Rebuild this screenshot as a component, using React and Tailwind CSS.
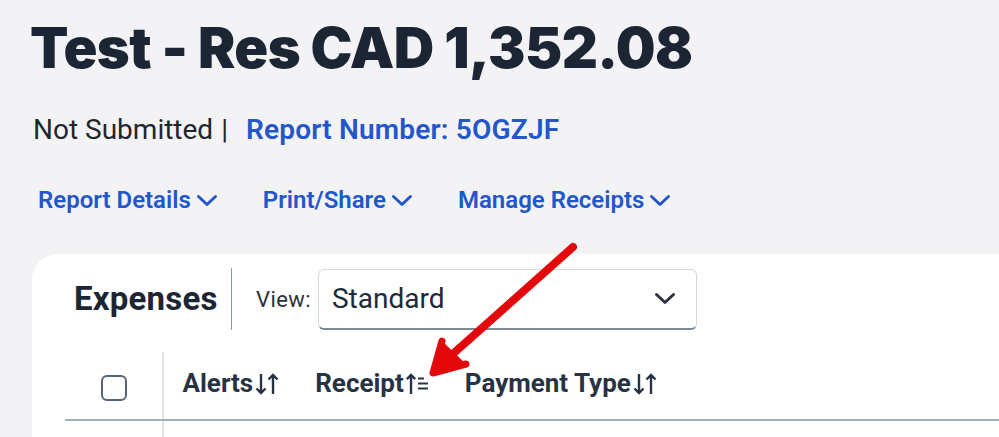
import React from 'react';

const Chevron = ({ className }) => (
  <svg className={className} viewBox="0 0 22 13" fill="none">
    <path d="M2.5 2.5l8.5 8 8.5-8" stroke="currentColor" strokeWidth="3" strokeLinecap="round" strokeLinejoin="round" />
  </svg>
);

// down arrow + up arrow, the neutral sort mark
const SortBoth = () => (
  <svg className="w-[26px] h-[24px] ml-[1px]" viewBox="0 0 26 24" fill="none">
    <path d="M7 2v19M2.5 16.5L7 21l4.5-4.5" stroke="currentColor" strokeWidth="2.4" />
    <path d="M19 22V3M14.5 7.5L19 3l4.5 4.5" stroke="currentColor" strokeWidth="2.4" />
  </svg>
);

// up arrow + stacked lines, the active ascending mark
const SortAsc = () => (
  <svg className="w-[24px] h-[24px] ml-[1px]" viewBox="0 0 24 24" fill="none">
    <path d="M6 22V3M1.8 7.2L6 3l4.2 4.2" stroke="currentColor" strokeWidth="2.4" />
    <path d="M13 6.5h6M13 11.5h10M13 16.5h10" stroke="currentColor" strokeWidth="1.8" />
  </svg>
);

const NavLink = ({ children }) => (
  <button className="flex items-center gap-[5px] text-[24px] font-semibold text-[#2357c9]">
    {children}
    <Chevron className="w-[22px] h-[13px]" />
  </button>
);

export default function App() {
  return (
    <div
      className="relative flex flex-col h-[437px] w-[999px] overflow-hidden bg-[#f3f3f6] text-[#1d2a3a]"
      style={{ fontFamily: 'Roboto, "Liberation Sans", sans-serif' }}
    >
      <h1
        className="pl-[30px] pt-[16px] text-[56px] leading-[64px] font-black text-[#1c2533] tracking-[-0.6px]"
        style={{ fontFamily: 'Inter, "Liberation Sans", sans-serif' }}
      >
        Test - Res CAD 1,352.08
      </h1>

      <div className="flex items-center pl-[33px] mt-[32px] h-[36px] text-[28px]">
        <span className="text-[#22262c]">Not Submitted</span>
        <span className="ml-[8px] text-[#22262c]">|</span>
        <span className="ml-[18px] font-semibold text-[#2357c9] tracking-[0.2px]">Report Number: 5OGZJF</span>
      </div>

      <div className="flex items-center gap-[45px] pl-[38px] mt-[36px] h-[32px]">
        <NavLink>Report Details</NavLink>
        <NavLink>Print/Share</NavLink>
        <NavLink>Manage Receipts</NavLink>
      </div>

      <div className="flex-1 ml-[32px] mt-[38px] bg-white rounded-tl-[26px] flex flex-col">
        <div className="flex items-center h-[62px] mt-[14px] pl-[42px]">
          <span className="text-[33px] font-bold text-[#1c2533] tracking-[0.2px]">Expenses</span>
          <div className="w-[1.5px] h-[62px] bg-[#8a96a3] ml-[13px]" />
          <span className="ml-[24px] text-[22px] tracking-[0.4px] text-[#2a3340]">View:</span>
          <div className="ml-[7px] w-[379px] h-[61px] border border-[#d4d9de] border-b-[2px] border-b-[#7c8894] rounded-[6px] flex items-center justify-between pl-[13px] pr-[20px]">
            <span className="text-[28px] text-[#1d2a3a]">Standard</span>
            <Chevron className="w-[22px] h-[13px] text-[#2a3340]" />
          </div>
        </div>

        <div className="flex-1 flex flex-col ml-[33px] mt-[22px]">
          <div className="flex h-[69px] border-b-[2px] border-[#a6b0bb]">
            <div className="w-[97px] flex items-center justify-center pt-[4px]">
              <div className="w-[26px] h-[26px] rounded-[6px] border-[2px] border-[#56657a]" />
            </div>
            <div className="w-[1.5px] bg-[#dde1e5]" />
            <div className="flex items-center pb-[4px] pl-[19px] text-[26px] font-bold text-[#273342]">
              <span className="flex items-center">Alerts<SortBoth /></span>
              <span className="flex items-center ml-[35px]">Receipt<SortAsc /></span>
              <span className="flex items-center ml-[36px]">Payment Type<SortBoth /></span>
            </div>
          </div>
          <div className="flex flex-1">
            <div className="w-[97px]" />
            <div className="w-[1.5px] bg-[#dde1e5]" />
          </div>
        </div>
      </div>

      <svg className="absolute left-0 top-0 pointer-events-none" width="999" height="437" viewBox="0 0 999 437">
        <path d="M573 247L437 368" stroke="#e3080b" strokeWidth="8" strokeLinecap="round" />
        <path d="M442 341L433 373L466 364" stroke="#e3080b" strokeWidth="7" strokeLinecap="round" strokeLinejoin="round" fill="#e3080b" />
      </svg>
    </div>
  );
}
